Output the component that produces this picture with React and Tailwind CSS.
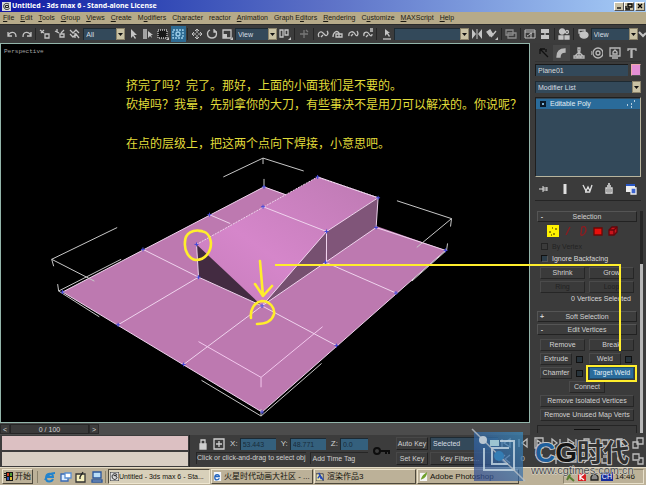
import React from 'react';
import clsx from 'clsx';

const menus = ['File', 'Edit', 'Tools', 'Group', 'Views', 'Create', 'Modifiers', 'Character', 'reactor', 'Animation', 'Graph Editors', 'Rendering', 'Customize', 'MAXScript', 'Help'];
const accelerators = { Modifiers: 1, Character: 1, 'Graph Editors': 7, Customize: 1, reactor: -1 };

function Icon({ children, w = 12, h = 12, className }) {
    return (
        <svg width={w} height={h} viewBox={`0 0 ${w} ${h}`} fill="none" stroke="currentColor" strokeWidth="1.3" className={clsx('shrink-0', className)} aria-hidden="true">
            {children}
        </svg>
    );
}

function Tool({ label, active, children }) {
    return (
        <button aria-label={label} className={clsx('flex h-4 w-[15px] shrink-0 items-center justify-center', active ? 'bg-[#2d6a92] text-[#9fd0ea]' : 'text-[#c4c4c4]')}>
            <Icon>{children}</Icon>
        </button>
    );
}

function Group({ children, className }) {
    return <div className={clsx('flex shrink-0 items-center', className)}>{children}</div>;
}

function Divider() {
    return <span className="mx-px h-3 w-px shrink-0 bg-[#262626]" />;
}

function Combo({ label, value, className }) {
    return (
        <div className={clsx('relative h-3 shrink-0', className)}>
            <select aria-label={label} className="block h-3 w-full appearance-none border-t border-l border-[#1e2a32] bg-[#33495a] pl-0.5 text-[7px]/[9px] text-[#d5dde2]">
                <option>{value}</option>
            </select>
            <span className="pointer-events-none absolute top-0 right-0 flex h-3 w-[9px] items-center justify-center border border-[#8d856c] bg-[#c9c2a4]">
                <svg width="5" height="3" viewBox="0 0 5 3" aria-hidden="true"><path d="M0 0h5L2.5 3z" fill="#111" /></svg>
            </span>
        </div>
    );
}

function TitleBar() {
    return (
        <header className="flex h-3 shrink-0 items-center bg-linear-to-r from-[#1414a4] via-[#5c70c6] to-[#a6ccf6] pr-px pl-0.5">
            <svg width="9" height="9" viewBox="0 0 9 9" className="mr-px" aria-hidden="true">
                <rect width="9" height="9" fill="#d9d9d9" />
                <path d="M7 2.2C3 0 1 3 2 5.5S6 8 7.5 6.4M3.5 3.5h3v2h-3z" stroke="#222" fill="none" />
            </svg>
            <h1 className="flex-1 font-['Noto_Sans',sans-serif] text-[7px]/[10px] font-bold text-white">Untitled - 3ds max 6 - Stand-alone License</h1>
            {['M2 6h4', 'M3 2h4v3H3zM1 4v3h4', 'M2 2l4 4M6 2l-4 4'].map((d, i) => (
                <button key={d} aria-label={['Minimize', 'Restore', 'Close'][i]} className={clsx('flex h-[9px] w-2.5 items-center justify-center border border-t-white border-r-[#555] border-b-[#555] border-l-white bg-[#c9c1a6] text-black', i === 2 && 'ml-px')}>
                    <Icon w={8} h={8}><path d={d} /></Icon>
                </button>
            ))}
        </header>
    );
}

function MenuBar() {
    return (
        <nav className="flex h-3 shrink-0 items-center gap-1.5 bg-[#b6aa89] pl-[3px] text-[7px]/[10px] whitespace-nowrap text-[#1c1a12]">
            {menus.map((m) => {
                const at = accelerators[m] ?? 0;
                return (
                    <button key={m}>
                        {at < 0 ? m : <>{m.slice(0, at)}<u>{m[at]}</u>{m.slice(at + 1)}</>}
                    </button>
                );
            })}
        </nav>
    );
}

function Toolbar() {
    return (
        <div className="flex h-[19px] shrink-0 items-center justify-between overflow-hidden border-t border-[#2a2a2a] bg-[#3c3c3c] pl-1">
            <Group>
                <Tool label="Undo"><path d="M2 4v4h4M2 8c2-5 8-5 8 1" /></Tool>
                <Tool label="Redo"><path d="M10 4v4H6M10 8C8 3 2 3 2 9" /></Tool>
            </Group>
            <Divider />
            <Group>
                <Tool label="Select and link"><path d="M1 2l4 3M2 5l3-3M6 6h4v4H6z" /></Tool>
                <Tool label="Unlink"><path d="M1 3l4 2M3 1v3M6 6h4v3H6zM10 2l-3 3" /></Tool>
                <Tool label="Bind to space warp"><path d="M1 2l3 3 3-3 3 3M1 6l3 3 3-3 3 4M6 5v5" /></Tool>
            </Group>
            <Combo label="Selection filter" value="All" className="w-[42px]" />
            <Group>
                <Tool label="Select object"><path d="M4 1v9l2-2 2 3 1-1-2-3h3z" fill="currentColor" stroke="none" /></Tool>
                <Tool label="Select by name"><path d="M1 2h4M1 4h4M1 6h4M1 8h4M1 10h4" /><path d="M6 3v7l2-2 2 2-1-3h2z" fill="currentColor" stroke="none" /></Tool>
                <Tool label="Selection region"><path d="M1 2h9v8H1z" fill="#171717" strokeDasharray="1 1" /><path d="M12 9v3H9z" fill="currentColor" stroke="none" /></Tool>
                <Tool label="Window crossing" active><path d="M1 2h10v8H1z" strokeDasharray="2 1" /><circle cx="6" cy="6" r="2" /></Tool>
            </Group>
            <Divider />
            <Group>
                <Tool label="Move"><path d="M6 1v4M6 7v4M1 6h4M7 6h4M4 3l2-2 2 2M4 9l2 2 2-2M3 4L1 6l2 2M9 4l2 2-2 2" strokeWidth="1" /></Tool>
                <Tool label="Rotate"><path d="M4 2C0 4 1 10 6 10s6-6 2-8M8 1v3h3" /></Tool>
                <Tool label="Scale"><path d="M2 2h8v8H2z" /><path d="M2 6h4v4H2z" fill="currentColor" stroke="none" /><path d="M12 9v3H9z" fill="currentColor" stroke="none" /></Tool>
            </Group>
            <Combo label="Reference coordinate system" value="View" className="w-[42px]" />
            <Group><Tool label="Pivot center"><path d="M1 2h3v7H1zM6 2h3v5H6z" /><path d="M12 9v3H9z" fill="currentColor" stroke="none" /></Tool></Group>
            <Divider />
            <Group><Tool label="Manipulate"><path d="M6 2v8M2 6h8M8 2l2 2" stroke="#777" /></Tool></Group>
            <Divider />
            <Group>
                <Tool label="Snap"><path d="M2 9C0 5 4 2 6 5l2 2c2 2 4-2 2-4M4 9l2-2" /></Tool>
                <Tool label="Angle snap"><path d="M1 9c0-5 4-7 6-4v4M4 9V6h6v3z" /></Tool>
                <Tool label="Percent snap"><path d="M2 8c-1-4 4-6 6-2s4 0 2-3M4 8l2-2" /></Tool>
                <Tool label="Spinner snap"><path d="M2 8c-1-4 3-5 5-2s3 2 3 0M8 1h3M8 3h3M4 9l2-2" /></Tool>
            </Group>
            <Divider />
            <Group><Tool label="Named selection sets"><path d="M5 1v7l2-2 2 3 1-1-2-3h2z" fill="currentColor" stroke="none" /><path d="M3 11h8" /></Tool></Group>
            <Combo label="Named selections" value="" className="w-[75px]" />
            <Group>
                <Tool label="Mirror"><path d="M1 1l4 5-4 5zM11 1L7 6l4 5z" fill="currentColor" stroke="none" /><path d="M6 1v10" strokeWidth="1" /></Tool>
                <Tool label="Align"><path d="M1 4l3-2 3 5-3 1zM5 9l5-6" fill="currentColor" /><path d="M12 9v3H9z" fill="currentColor" stroke="none" /></Tool>
            </Group>
            <Divider />
            <Group><Tool label="Layers"><path d="M1 2h7v5H1zM3 5h8v5H3z" stroke="#8a8a8a" /></Tool></Group>
            <Divider />
            <Group>
                <Tool label="Curve editor"><path d="M1 2h10v8H1zM1 4h10M3 8c2 0 2-3 5-3M7 5v5" strokeWidth="1" /></Tool>
                <Tool label="Schematic view"><path d="M2 1h8v4H2zM2 7h8v4H2z" fill="currentColor" stroke="none" /><path d="M6 4v4" /></Tool>
            </Group>
            <Divider />
            <Group><Tool label="Material editor"><circle cx="4" cy="3.5" r="2.5" fill="currentColor" /><circle cx="9" cy="4" r="1.5" /><path d="M1 8h4v3H1zM7 8h4v3H7z" fill="currentColor" /></Tool></Group>
            <Divider />
            <Group><Tool label="Render scene"><path d="M2 2h6v3H2z" /><ellipse cx="7" cy="7" rx="4" ry="3" fill="currentColor" /></Tool></Group>
            <Combo label="Render type" value="View" className="w-[47px]" />
            <Icon w={8} h={12} className="text-[#c4c4c4]"><path d="M1 4l4 4 3-3" strokeWidth="2" /></Icon>
        </div>
    );
}

const vertices = [[61, 293], [142, 250], [209, 215], [264, 187], [198, 278], [117, 326], [183, 366], [262, 414], [337, 347], [397, 294], [447, 251], [377, 228], [326, 263], [262, 307], [196, 245], [263, 207], [318, 177], [379, 198], [327, 232]];

function Scene() {
    return (
        <svg viewBox="0 43 530 381" className="absolute inset-0 h-full w-full" role="img" aria-label="Editable poly plane with extruded faces">
            <defs>
                <linearGradient id="top" x1="0" y1="1" x2="1" y2="0">
                    <stop offset="0" stopColor="#c67cba" />
                    <stop offset=".4" stopColor="#d586ca" />
                    <stop offset="1" stopColor="#bd7ab2" />
                </linearGradient>
            </defs>
            <path d="M61 293L264 187L447 251L262 414Z" fill="#bd79b0" />
            <path d="M379 198L377 228L326 263L327 232Z" fill="#805579" />
            <path d="M327 232L326 263L262 307Z" fill="#765070" />
            <path d="M196 245L318 177L379 198L327 232L262 307Z" fill="url(#top)" />
            <path d="M196 245L198 278L262 307Z" fill="#432b41" />
            <g fill="none" stroke="#f0d4ee" strokeWidth="1">
                <path d="M61 293L264 187L286 195M377 228L447 251L262 414L61 293" />
                <path d="M142 250L198 278L262 307L337 347M209 215L230 224M198 278L117 326M262 307L183 366M326 263L397 294M196 245L198 278M377 228L262 307" />
                <path d="M318 177L379 198L377 228M379 198L327 232L262 307M263 207L327 232V263" />
                <path d="M196 245L318 177L379 198" strokeDasharray="2 1" />
            </g>
            <g fill="none" stroke="#c9c9c9" strokeWidth="1">
                <path d="M116 228L50 260L93 282M50 260L52 267M56 285L57 292L98 318M57 292L120 260" />
                <path d="M223 177L263 158L304 171M263 158V164M264 179V187" />
                <path d="M398 201L453 219L418 248M453 219L452 227M449 244L448 251L413 282" />
                <path d="M201 382L261 418L322 365M261 411V418" />
                <path d="M198 343L261 379L323 328M261 379V389" stroke="#f3c8ee" />
            </g>
            <g stroke="#4548d8" strokeWidth="1">
                {vertices.map(([x, y]) => <path key={`${x}-${y}`} d={`M${x - 2} ${y}h4M${x} ${y - 2}v4`} />)}
            </g>
        </svg>
    );
}

function Viewport() {
    return (
        <main className="relative min-w-0 flex-1 overflow-hidden border border-[#93b5aa] bg-black">
            <Scene />
            <div className="relative px-[3px] pt-1 font-['Liberation_Mono',monospace] text-[6px]/[8px] text-[#a5a5a5]">Perspective</div>
            <div className="relative pt-[19px] pl-[125px] font-['Noto_Sans_CJK_SC',sans-serif] text-[12px]/[19px] whitespace-nowrap text-[#e0dc3a]">
                <p>挤完了吗？完了。那好，上面的小面我们是不要的。</p>
                <p>砍掉吗？我晕，先别拿你的大刀，有些事决不是用刀可以解决的。你说呢？</p>
                <p className="pt-5">在点的层级上，把这两个点向下焊接，小意思吧。</p>
            </div>
        </main>
    );
}

function Btn({ children, disabled, active, className }) {
    return (
        <button
            disabled={disabled}
            className={clsx(
                'h-3 min-w-0 border text-[7px]/[10px] whitespace-nowrap',
                active ? 'border-[#1d4d70] bg-[#2a6c9c] text-[#e2eef5]' : 'border-t-[#4b4b4b] border-r-[#262626] border-b-[#262626] border-l-[#4b4b4b] bg-[#3a3a3a]',
                disabled ? 'text-[#222]' : 'text-[#d2d2d2]',
                className,
            )}
        >
            {children}
        </button>
    );
}

function Rollup({ sign, title }) {
    return (
        <button className="grid h-[11px] w-full grid-cols-[8px_1fr_8px] items-center border border-t-[#555] border-r-[#222] border-b-[#222] border-l-[#555] bg-[#3d3d3d] text-[7px]/[9px] text-[#d2d2d2]">
            <b>{sign}</b>
            <span>{title}</span>
        </button>
    );
}

function Settings({ label }) {
    return <button aria-label={`${label} settings`} className="size-[7px] shrink-0 border border-[#111] bg-[#27333b]" />;
}

const tabs = [
    ['Create', 'M2 2l8 8M2 2v5M2 2h5M8 2v3'],
    ['Modify', 'M2 10C2 5 5 2 10 2v3C7 5 5 7 5 10z'],
    ['Hierarchy', 'M5 1h2v3H5zM6 4v5M6 5L2 9M6 5l4 4M1 9h3v2H1zM5 9h2v2H5zM8 9h3v2H8z'],
    ['Motion', 'M7 1a5 5 0 1 1 0 10a5 5 0 1 1 0-10M7 4a2 2 0 1 1 0 4a2 2 0 1 1 0-4M0 4v4'],
    ['Display', 'M1 1h10v8H1zM3 11h6M4 7V5l2-2 2 2v2z'],
    ['Utilities', 'M2 4V2h8v2M6 2v9M5 3v8'],
];

function CommandPanel() {
    return (
        <aside className="flex w-[116px] shrink-0 flex-col bg-[#3b3b3b] px-[5px] pt-0.5">
            <div className="flex h-[17px] items-center justify-between border-b border-[#333] text-[#b9b9b9]">
                {tabs.map(([name, d], i) => (
                    <button key={name} aria-label={name} className={clsx('flex h-4 w-[17px] items-center justify-center', i === 1 && 'bg-[#474747]', i === 0 && 'text-[#111]')}>
                        <Icon><path d={d} fill={i === 1 ? 'currentColor' : 'none'} /></Icon>
                    </button>
                ))}
            </div>
            <div className="mt-0.5 flex gap-[3px]">
                <input aria-label="Object name" defaultValue="Plane01" className="h-3 w-0 min-w-0 flex-1 border-t border-l border-[#1a1a1a] bg-[#33495a] pl-0.5 text-[7px]/[10px] text-[#d8d8d8]" />
                <button aria-label="Object color" className="h-3 w-2.5 border border-[#eaa] border-r-[#555] border-b-[#555] bg-[#e58fd6]" />
            </div>
            <Combo label="Modifier list" value="Modifier List" className="mt-[5px]" />
            <div className="mt-1 h-20 shrink-0 border border-t-[#1f1f1f] border-r-[#b8b49d] border-b-[#b8b49d] border-l-[#1f1f1f] bg-[#33495a] pt-px">
                <div className="flex h-2.5 items-center bg-[#2a6b9a] px-1 text-[7px]/[10px] text-[#e2edf3]">
                    <span className="mr-1 flex size-[6px] items-center justify-center bg-[#0c1a28]"><i className="size-0.5 bg-[#7ab4da]" /></span>
                    <span className="flex-1">Editable Poly</span>
                    <Icon w={10} h={8}><path d="M1 5h1M5 7h1M8 1h1M5 4h1" /></Icon>
                </div>
            </div>
            <div className="flex h-6 shrink-0 items-center justify-between border-b border-[#252525] px-1 text-[#e0e0e0]">
                <button aria-label="Pin stack"><Icon w={10}><path d="M0 6h4M4 3v6M8 4v4M4 5h4M4 7h4" strokeWidth="1" /></Icon></button>
                <button aria-label="Show end result"><Icon><path d="M6 1v10" strokeWidth="3" /></Icon></button>
                <button aria-label="Make unique"><Icon><path d="M2 2l3 6 2-4 2 4 2-6M4 9h5" /></Icon></button>
                <button aria-label="Remove modifier"><Icon><path d="M3 5h6v5H3zM4 3h4M5 1h2M5 6v3M7 6v3" /></Icon></button>
                <button aria-label="Configure sets"><Icon><path d="M1 1h9v8H1z" fill="#eee" stroke="none" /><path d="M1 2h9" stroke="#2856c4" strokeWidth="2" /><path d="M6 5h5v6H6z" fill="#3d64cf" stroke="#eee" /></Icon></button>
            </div>
            <div className="-mr-0.5 flex pt-2.5">
                <div className="min-w-0 flex-1 pr-[3px] pl-0.5">
                    <Rollup sign="-" title="Selection" />
                    <div className="flex h-4 items-center gap-[3px] pt-0.5 pl-2.5">
                        <button aria-label="Vertex" className="bg-[#fff200]"><Icon><path d="M2 7h2M6 9h2M8 4h2M5 3h1M4 10h1" stroke="#7b6a00" /></Icon></button>
                        <button aria-label="Edge"><Icon><path d="M4 10l4-8" stroke="#8e1c20" /></Icon></button>
                        <button aria-label="Border"><Icon><path d="M5 2c4-2 5 3 3 6s-5 3-4 0 0-4 1-6z" stroke="#8e1c20" /></Icon></button>
                        <button aria-label="Polygon"><Icon><path d="M2 3h8v7H2z" fill="#e8100c" stroke="#6b0806" /></Icon></button>
                        <button aria-label="Element"><Icon><path d="M2 5l3-3h5v5l-3 3H2z" fill="#c8141c" stroke="#64070b" /><path d="M2 5h5v5M7 5l3-3" stroke="#64070b" /></Icon></button>
                    </div>
                    <div className="flex flex-col gap-[3px] pt-1 pl-1 text-[7px]/[9px]">
                        <label className="flex items-center gap-1 text-[#232323]">
                            <input type="checkbox" disabled className="size-[7px] appearance-none border border-[#252525]" />
                            By Vertex
                        </label>
                        <label className="flex items-center gap-1 text-[#dadada]">
                            <input type="checkbox" className="size-[7px] appearance-none border border-t-[#111] border-r-[#555] border-b-[#555] border-l-[#111] bg-[#2c3d49]" />
                            Ignore Backfacing
                        </label>
                    </div>
                    <div className="grid grid-cols-2 gap-x-1 gap-y-0.5 px-[3px] pt-1">
                        <Btn>Shrink</Btn>
                        <Btn>Grow</Btn>
                        <Btn disabled>Ring</Btn>
                        <Btn disabled>Loop</Btn>
                    </div>
                    <p className="pr-1.5 text-right text-[7px]/[11px] text-[#d8d8d8]">0 Vertices Selected</p>
                    <div className="flex flex-col gap-0.5 pt-[7px]">
                        <Rollup sign="+" title="Soft Selection" />
                        <Rollup sign="-" title="Edit Vertices" />
                    </div>
                    <div className="flex flex-col gap-0.5 px-[3px] pt-1">
                        <div className="grid grid-cols-2 gap-x-1">
                            <Btn>Remove</Btn>
                            <Btn>Break</Btn>
                        </div>
                        <div className="grid grid-cols-2 gap-x-1">
                            <div className="flex items-center gap-1 pr-0.5"><Btn className="flex-1">Extrude</Btn><Settings label="Extrude" /></div>
                            <div className="flex items-center gap-1 pr-0.5"><Btn className="flex-1">Weld</Btn><Settings label="Weld" /></div>
                        </div>
                        <div className="grid grid-cols-2 gap-x-1">
                            <div className="flex items-center gap-1 pr-0.5"><Btn className="flex-1">Chamfer</Btn><Settings label="Chamfer" /></div>
                            <Btn active>Target Weld</Btn>
                        </div>
                        <Btn className="w-9 self-center">Connect</Btn>
                        <Btn>Remove Isolated Vertices</Btn>
                        <Btn>Remove Unused Map Verts</Btn>
                    </div>
                    <div className="mt-1 h-2 border border-b-0 border-[#252525] px-9 pt-[3px]">
                        <div className="h-px bg-[#111]" />
                    </div>
                </div>
                <div className="flex w-[3px] flex-col bg-[#262626] pt-[53px]">
                    <div className="flex-1 bg-[#b7b7b7]" />
                </div>
            </div>
        </aside>
    );
}

function Coord({ axis, value, className }) {
    return (
        <label className="flex items-center gap-0.5 text-[8px]/[10px] text-[#d2d2d2]">
            {axis}:
            <input defaultValue={value} className={clsx('h-3 border-t border-l border-[#1d2a33] bg-[#34607d] pl-0.5 text-[7px]/[10px] text-[#182c3a]', className)} />
        </label>
    );
}

function StatusBar() {
    return (
        <section className="flex h-8 shrink-0 bg-[#3c3c3c] text-[7px]/[10px] whitespace-nowrap text-[#d0d0d0]">
            <div className="flex w-[190px] shrink-0 flex-col gap-0.5 border-r border-[#222] pt-px pr-px pb-px pl-0.5">
                <input aria-label="Macro recorder" className="min-h-0 w-full flex-1 bg-[#dcc0c2]" />
                <input aria-label="Listener" className="min-h-0 w-full flex-1 bg-[#d8cfc4]" />
            </div>
            <div className="flex w-[178px] shrink-0 flex-col">
                <div className="flex h-[17px] items-center justify-between pl-2">
                    <Icon w={10}><path d="M2 6h6v5H2z" fill="currentColor" /><path d="M3 6V2h4v4" /></Icon>
                    <Icon><path d="M1 1h10v10H1zM6 3v6M3 6h6" /></Icon>
                    <Coord axis="X" value="53.443" className="w-9" />
                    <Coord axis="Y" value="48.771" className="w-9" />
                    <Coord axis="Z" value="0.0" className="w-7" />
                </div>
                <div className="flex gap-1 pl-1.5">
                    <p className="h-3 shrink-0 border-t border-l border-[#262626]">Click or click-and-drag to select obj</p>
                    <button className="h-3 flex-1 border-t border-l border-[#262626] pl-0.5 text-left">Add Time Tag</button>
                </div>
            </div>
            <div className="flex w-7 shrink-0 items-center justify-center">
                <svg width="18" height="10" viewBox="0 0 18 10" fill="none" stroke="#0d0d0d" strokeWidth="2" aria-label="Set keys"><circle cx="4" cy="5" r="3" /><path d="M7 5h10M13 5v3M16 5v3" /></svg>
            </div>
            <div className="grid w-[102px] shrink-0 grid-cols-[32px_1fr] gap-x-0.5 gap-y-0.5 py-0.5">
                <button className="border border-[#484848] border-r-[#222] border-b-[#222]">Auto Key</button>
                <select aria-label="Key set" className="appearance-none border-t border-l border-[#1e2a32] bg-[#33495a] pl-0.5 text-[#d5dde2]"><option>Selected</option></select>
                <button className="border border-[#484848] border-r-[#222] border-b-[#222]">Set Key</button>
                <button className="border border-[#484848] border-r-[#222] border-b-[#222] pr-2">Key Filters...</button>
            </div>
            <div className="grid flex-1 grid-cols-9 place-items-center text-[#bdbdbd]">
                {['M2 2v8M10 2L4 6l6 4z', 'M10 2L5 6l5 4zM2 2v8', 'M2 1h8v10H2zM4 3l4 3-4 3z', 'M2 2l5 4-5 4zM10 2v8', 'M2 2l6 4-6 4zM10 2v8', 'M2 2h5v8H2zM8 4v4', 'M3 3h6v6H3z', 'M2 2h5v5H2zM6 6h4v4H6z', 'M5 1h6v6H5zM1 5h5v6H1z'].map((d) => (
                    <Icon key={d}><path d={d} /></Icon>
                ))}
                {['M10 2L5 6l5 4M5 2L1 6l4 4', '', 'M2 2h8', 'M6 1v10M2 6h8', 'M2 3h8v6H2z', 'M2 10L10 2', 'M3 5v5h6V5M5 5V2M7 5V2', 'M9 2a4 4 0 1 0 1 6', 'M1 1h6v6H1zM7 5h4v6H6V8'].map((d, i) => (
                    i === 1 ? <output key="frame" className="text-[8px]">0</output> : <Icon key={`b${d}`}><path d={d} /></Icon>
                ))}
            </div>
        </section>
    );
}

const tasks = [
    ['Untitled - 3ds max 6 - Sta...', 'max'],
    ['火星时代动画大社区 - ...', 'ie'],
    ['渲染作品3', 'pic'],
    ['Adobe Photoshop', 'ps'],
];

function TaskIcon({ kind }) {
    return (
        <svg width="9" height="9" viewBox="0 0 10 10" fill="none" className="shrink-0" aria-hidden="true">
            {kind === 'max' && <><path d="M0 0h10v10H0z" fill="#ddd" stroke="#222" /><path d="M8 3C4 0 1 4 3 7s5 0 5-1M4 4h3v2" stroke="#111" /></>}
            {kind === 'ie' && <><path d="M1 0h8v10H1z" fill="#f2f5fa" /><path d="M3 5h4c0-3-5-3-5 1s4 3 5 1" stroke="#2565bd" strokeWidth="1.5" /></>}
            {kind === 'pic' && <><path d="M0 2h8v8H0z" fill="#e8e2a8" stroke="#334" /><path d="M3 1l5 8M2 7l2-3 2 4" stroke="#2448b8" strokeWidth="1.5" /></>}
            {kind === 'ps' && <><path d="M1 1h8v9H1z" fill="#f5f5f5" /><path d="M2 9C3 4 6 2 9 0 9 4 7 7 3 8" fill="#6f9f2b" /></>}
        </svg>
    );
}

function Taskbar() {
    return (
        <footer className="flex h-[18px] shrink-0 items-center gap-0.5 border-t border-[#e2dac4] bg-[#bcb198] px-0.5 font-['Liberation_Sans','Noto_Sans_CJK_SC',sans-serif] text-[8px]/[12px] whitespace-nowrap text-[#15130d]">
            <button className="flex h-[15px] w-[31px] shrink-0 items-center gap-px border border-t-[#eee6d0] border-r-[#4e493c] border-b-[#4e493c] border-l-[#eee6d0] px-px">
                <svg width="10" height="9" viewBox="0 0 10 9" className="shrink-0" aria-hidden="true">
                    <path d="M0 1h2v1H0zM0 3h2v1H0zM0 5h2v1H0zM2 0h7v9H2z" fill="#161616" />
                    <path d="M3 1h2v3H3z" fill="#d2371f" /><path d="M6 1h2v3H6z" fill="#4c9a34" /><path d="M3 5h2v3H3z" fill="#2b50b5" /><path d="M6 5h2v3H6z" fill="#e0b92e" />
                </svg>
                开始
            </button>
            <div className="ml-0.5 flex w-[69px] shrink-0 items-center justify-around border-x border-[#8a826b] pl-1">
                <Icon><path d="M3 6h6c0-5-7-4-7 1s6 4 7 1M1 9C3 5 7 2 11 2" stroke="#2383cc" strokeWidth="2" /></Icon>
                <Icon><path d="M1 3h7v7H1z" fill="#dcecff" stroke="#3769b5" /><path d="M5 2h6v5H5z" fill="#fff" stroke="#5a8ed1" /></Icon>
                <Icon><path d="M1 3h9v8H1z" fill="#f5efbb" stroke="#333" /><path d="M8 1L5 6v2" stroke="#222" /></Icon>
                <Icon><path d="M2 1h8v6H2z" fill="#b9ddf8" stroke="#28559b" /><path d="M1 9h10v2H1z" fill="#eee" stroke="#28559b" /></Icon>
            </div>
            <div className="flex min-w-0 flex-1 gap-px">
                {tasks.map(([label, kind], i) => (
                    <button key={label} className={clsx('flex h-[15px] w-[102px] min-w-0 items-center border pl-px', i === 0 ? 'border-t-[#4e493c] border-r-[#eee6d0] border-b-[#eee6d0] border-l-[#4e493c] bg-[#d8d0ba] text-[7px]/[12px]' : 'gap-0.5 border-t-[#eee6d0] border-r-[#4e493c] border-b-[#4e493c] border-l-[#eee6d0] text-[8px]/[12px]')}>
                        <TaskIcon kind={kind} />
                        {label}
                    </button>
                ))}
            </div>
            <div className="flex h-[15px] w-[81px] shrink-0 items-center justify-end gap-0.5 border border-t-[#8a826b] border-r-[#e8e0ca] border-b-[#e8e0ca] border-l-[#8a826b] pr-2">
                <Icon w={10} h={10}><path d="M1 2l8 7M6 1L2 8" stroke="#587c32" strokeWidth="2" /></Icon>
                <Icon w={10} h={10}><path d="M1 1h8v8H1z" fill="#d82022" stroke="none" /><path d="M3 2v6M7 2L3 5l4 3" stroke="#fff" /></Icon>
                <Icon w={10} h={10}><path d="M2 5l2-3h3l2 3v3H2z" fill="#888" stroke="#222" /></Icon>
                <span className="bg-[#182d9b] px-px text-[7px]/[9px] text-white">CH</span>
                <time>14:46</time>
            </div>
        </footer>
    );
}

// hand drawn marks that run across the viewport and the command panel
function Annotations() {
    return (
        <svg viewBox="0 0 646 485" className="pointer-events-none absolute inset-0 h-full w-full" fill="none" stroke="#ffee2c" strokeWidth="2" aria-hidden="true">
            <path d="M275 265H620V351M587 366H636V381H587Z" />
            <g strokeWidth="2.6" strokeLinecap="round" strokeLinejoin="round">
                <path d="M202 231C193 229 185 233 185 242C184 251 189 259 196 260C205 260 211 252 211 243C210 235 207 231 199 231" />
                <path d="M260 261L263 296M255 284L263 296L272 286" />
                <path d="M251 318C250 310 254 302 262 301C270 301 275 308 274 314C272 321 265 324 257 324" />
            </g>
        </svg>
    );
}

function Watermark() {
    return (
        <svg viewBox="0 0 646 485" className="pointer-events-none absolute inset-0 h-full w-full" fill="none" aria-label="CG时代">
            <defs>
                <linearGradient id="mark" x1="0" y1="1" x2="1" y2="0">
                    <stop offset="0" stopColor="#2f478f" />
                    <stop offset="1" stopColor="#398cc0" />
                </linearGradient>
            </defs>
            <path d="M474 432H523V481H474Z" fill="url(#mark)" opacity=".7" />
            <path d="M484 448V470H514V441H500M509 448H492V464H508" stroke="#c9dbe6" strokeWidth="2" opacity=".8" />
            <path d="M490 440H499V446H490Z" fill="#b7dce0" opacity=".8" />
            <path d="M472 429L525 481" stroke="#b9c0c8" strokeWidth="1.5" opacity=".8" />
            <circle cx="483" cy="440" r="4" fill="#b9c6d2" />
            <circle cx="499" cy="456" r="5" fill="#347db4" />
            <g fontFamily="Liberation Sans, Noto Sans CJK SC, sans-serif" paintOrder="stroke" strokeLinejoin="round">
                <text x="535" y="462" fontSize="28" fontWeight="bold" stroke="#c8c8c8" strokeWidth="2">
                    <tspan fill="#1e5f9c">C</tspan><tspan fill="#151515">G</tspan>
                    <tspan fill="#303030" fontSize="26">时代</tspan>
                </text>
                <text x="531" y="474" fontSize="11" fill="#4b4b4b" stroke="#dedbd2" strokeWidth="1">www.cgtimes.com.cn</text>
            </g>
        </svg>
    );
}

export default function App() {
    return (
        <div className="relative flex min-h-screen w-full flex-col overflow-hidden bg-[#3b3b3b] font-['Liberation_Sans',sans-serif]">
            <TitleBar />
            <MenuBar />
            <Toolbar />
            <div className="flex flex-1">
                <div className="flex min-w-0 flex-1 flex-col">
                    <Viewport />
                    <div className="flex h-3 shrink-0 items-center bg-[#4c4c4c] text-[7px]/[10px] text-[#d4d4d4]">
                        <button aria-label="Previous frame" className="h-2.5 w-2.5 border border-[#2a2a2a] bg-[#3c3c3c]">&lt;</button>
                        <button className="h-2.5 w-[79px] border border-[#252525] bg-[#3a3a3a]">0 / 100</button>
                        <button aria-label="Next frame" className="h-2.5 w-2.5 border border-[#2a2a2a] bg-[#3c3c3c]">&gt;</button>
                    </div>
                </div>
                <CommandPanel />
            </div>
            <StatusBar />
            <Taskbar />
            <Annotations />
            <Watermark />
        </div>
    );
}
